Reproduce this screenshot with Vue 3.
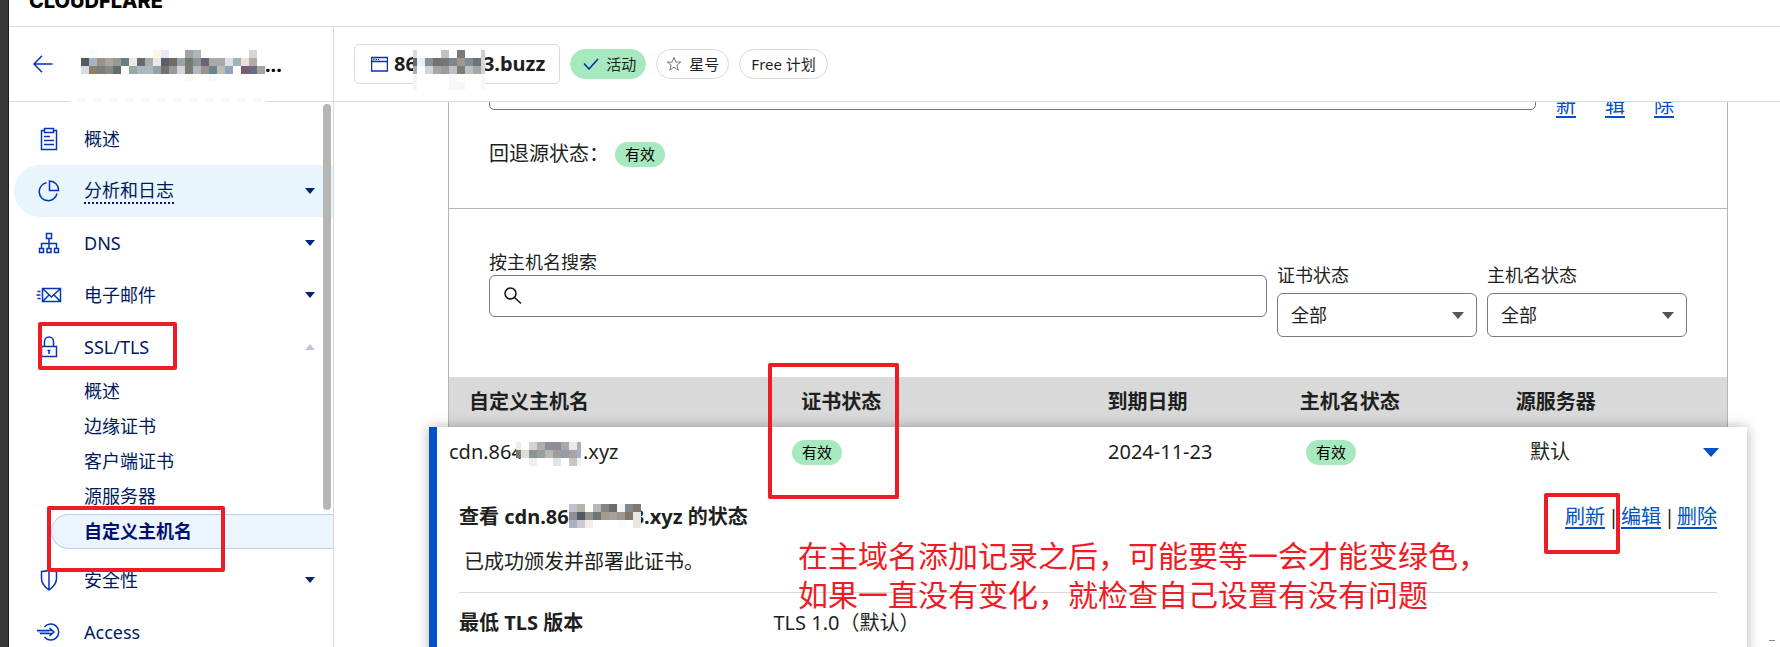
<script setup>
import { h, ref } from 'vue'

// Draws a pixelated patch that hides private characters.
// Each row is a list of colours; "-" leaves a cell clear.
const PixelPatch = ({ rows, widths }) => {
  const xs = []
  let total = 0
  for (const w of widths) {
    xs.push(total)
    total += w
  }
  const height = rows.length * 8
  const rects = []
  rows.forEach((row, r) =>
    row.split(' ').forEach((c, i) => {
      if (c !== '-') rects.push(h('rect', { x: xs[i], y: r * 8, width: widths[i], height: 8, fill: '#' + c }))
    })
  )
  return h('svg', { width: total, height, viewBox: `0 0 ${total} ${height}`, 'shape-rendering': 'crispEdges', 'aria-hidden': 'true' }, rects)
}
PixelPatch.props = ['rows', 'widths']

const accountPatch = {
  widths: Array(23).fill(8),
  rows: [
    '- f8fdff - - - - - - - fff6e8 e6eaf0 - - a0a3a6 b0b5bb - - - - - - d4d8da -',
    '555a60 a5b3c8 98918c b0a59c 9b9991 647f7f ebeae8 646a6e adadae e8e8e8 57606c 746a66 98a2ae 787a72 8b9698 686478 a8abae a9a9ab dfe0e4 a4b3b9 ece0da b7a8aa -',
    'd6dce3 8b8266 7d7b7d 88878a 61706d - 99a6a6 a9b7c1 adb7bd 92a2a8 7a6e72 99989c d4d6da 7c7c74 b2b8bf 9c918b 6c8394 c1b9b4 8fa4b8 - 755f70 6a6883 a5a4a3',
    '- - - - - - - - - - - - - faf9f8 - - f2faff - - - - - -'
  ]
}
const domainPatch = {
  widths: [4, 8, 8, 8, 8, 8, 8, 8, 8, 4],
  rows: [
    'd9dadf fff fff fff b9c3c8 fdfdfd 787a78 fff fff cfccca',
    '65696e eceef3 849196 747270 777475 7c868b a39890 838c90 6c7480 d8d6d4',
    'a9abac fff d0d6db ada49d 9a9b9f bbc0c8 7c7d78 bcc2c3 a6a8a5 d8d2ce',
    'f5f5f5 fff fff fff fff f7f7f7 fff fff fff f7f7f7',
    'f5f5f5 fff fff fff fff f7f7f7 f7f7f7 fff fff f7f7f7'
  ]
}
const hostPatch = {
  widths: [5, 8, 8, 8, 8, 8, 8, 8, 4],
  rows: [
    'f2ebe5 fff d3d3d6 afabb0 8c8e98 928b92 a9a8ac e9e9ed a8b0bc',
    '757977 dcdcd8 879493 9c9da0 b9b9b4 a09e9d 989ca8 a6a4a6 a9b3c8',
    '- fff f5eeec fff fff dde4ea fff c9c5be eef3f8'
  ]
}
const titlePatch = {
  widths: Array(9).fill(8),
  rows: [
    'bfc2cc b9b2a8 fff b5bab6 82848a 6e6c64 f5f5f5 838791 827769',
    '8c8f96 565963 93948e 71776e a59a8c a3a199 a09390 81756c e9e6e2',
    'a9b1bf cbc9ce f3eee9 fff fff fff fcfcfc fff e9e5e0'
  ]
}

const nav = [
  { label: '概述', icon: 'overview' },
  { label: '分析和日志', icon: 'analytics', caret: 'down', hover: true },
  { label: 'DNS', icon: 'dns', caret: 'down' },
  { label: '电子邮件', icon: 'email', caret: 'down' },
  {
    label: 'SSL/TLS',
    icon: 'ssl',
    caret: 'up',
    marked: true,
    children: [
      { label: '概述' },
      { label: '边缘证书' },
      { label: '客户端证书' },
      { label: '源服务器' },
      { label: '自定义主机名', current: true }
    ]
  },
  { label: '安全性', icon: 'shield', caret: 'down' },
  { label: 'Access', icon: 'access' }
]

const filters = [
  { id: 'cert-status', label: '证书状态', value: ref('all') },
  { id: 'host-status', label: '主机名状态', value: ref('all') }
]
const query = ref('')
const origin = ref('')
</script>

<template>
  <div class="shell">
    <div class="edge"></div>
    <div class="app">
      <header class="brandbar"><a class="brand" href="#">CLOUDFLARE</a></header>

      <div class="body">
        <aside class="sidebar">
          <div class="account">
            <button class="back" type="button" aria-label="返回">
              <svg width="20" height="18" viewBox="0 0 20 18"><path d="M9 .8 1 9l8 8.200M1 9h18.500" /></svg>
            </button>
            <span class="account-name"><PixelPatch v-bind="accountPatch" /><b>...</b></span>
            <span class="account-edge"></span>
          </div>

          <nav class="nav">
            <template v-for="item in nav" :key="item.label">
              <a class="item" :class="{ hover: item.hover }" href="#">
                <svg class="icon" width="26" height="24" viewBox="0 0 26 24">
                  <template v-if="item.icon === 'overview'">
                    <path d="M8.500 3.500H5.500v19h15v-19h-3M8.500 1.500h9v4h-9zM8 9.500h6M8 13.500h10M8 17.500h10" />
                  </template>
                  <template v-else-if="item.icon === 'analytics'">
                    <path d="M10.500 3.800A9 9 0 1 0 21 14.500" /><path d="M13.500 2v9.500H22.500A9 9 0 0 0 13.500 2z" />
                  </template>
                  <template v-else-if="item.icon === 'dns'">
                    <path d="M10.500 2.500h5v5h-5zM3.500 17.500h4v4h-4zM11 17.500h4v4h-4zM18.500 17.500h4v4h-4zM13 7.500v10M5.500 17.500v-5h15v5" />
                  </template>
                  <template v-else-if="item.icon === 'email'">
                    <path d="M6.500 5.500h18v13h-18zM7 6l8.500 8L24 6M7 18l6-6M24 18l-6-6M1.500 8.500h3M.5 12h4M1.500 15.500h3" />
                  </template>
                  <template v-else-if="item.icon === 'ssl'">
                    <path d="M5.500 11.500h15v10h-15zM8.500 11V6.500a4.500 4.500 0 0 1 9 0V11M13 15v4M11.500 15.500h3" />
                  </template>
                  <template v-else-if="item.icon === 'shield'">
                    <path d="M5.500 3.500q4 0 7.500-1.500 3.500 1.500 7.500 1.500v7c0 6-4 9-7.500 11.500C9.500 19.500 5.500 16.500 5.500 10.500zM13 2v20" />
                  </template>
                  <template v-else>
                    <path d="M8.500 7a8 8 0 1 1 0 10" /><path class="soft" d="M1 11h12v2H3z" /><path d="M1 10.500h16M4 13.500h13M13.500 8l4.500 4-4.500 4" />
                  </template>
                </svg>
                <span class="label">{{ item.label }}</span>
                <svg v-if="item.caret" class="caret" :class="item.caret" width="10" height="6" viewBox="0 0 10 6"><path d="M0 0h10L5 6z" /></svg>
                <i v-if="item.marked" class="mark mark-ssl"></i>
              </a>
              <ul v-if="item.children" class="sub">
                <li v-for="child in item.children" :key="child.label">
                  <a href="#" :class="{ current: child.current }">{{ child.label }}</a>
                  <i v-if="child.current" class="mark mark-custom"></i>
                </li>
              </ul>
            </template>
            <span class="thumb"></span>
          </nav>
        </aside>

        <main class="main">
          <div class="zonebar">
            <button class="zone" type="button">
              <svg class="window" width="17" height="16" viewBox="0 0 17 16"><path d="M.5 1.500h16v13.500H.5zM.5 5.500h16" /><path class="dots" d="M2 3.500h6" /></svg>
              <span>86</span><span class="gap"><PixelPatch class="patch" v-bind="domainPatch" /></span><span>3.buzz</span>
            </button>
            <span class="tag active">
              <svg width="16" height="12" viewBox="0 0 16 12"><path d="M1 5.500 6 11 15 1" /></svg>活动
            </span>
            <button class="tag star" type="button">
              <svg width="16" height="16" viewBox="0 0 16 16"><path d="m8 1.300 1.800 4.800h5l-4 3.100 1.500 5L8 11.200l-4.300 3 1.500-5-4-3.100h5z" /></svg>星号
            </button>
            <span class="tag plan">Free 计划</span>
          </div>

          <div class="viewport">
            <section class="card">
              <div class="fallback">
                <div class="origin">
                  <input v-model="origin" type="text" aria-label="回退源" />
                  <a href="#">刷新</a><a href="#">编辑</a><a href="#">删除</a>
                </div>
                <p class="state">回退源状态：<span class="ok">有效</span></p>
              </div>

              <div class="filters">
                <div class="search">
                  <label for="host-search">按主机名搜索</label>
                  <div class="search-box">
                    <svg width="18" height="18" viewBox="0 0 18 18"><circle cx="6.500" cy="6.500" r="5.500" /><path d="m10.500 10.500 6.500 6" /></svg>
                    <input id="host-search" v-model="query" type="text" />
                  </div>
                </div>
                <div v-for="f in filters" :key="f.id" class="filter">
                  <label :for="f.id">{{ f.label }}</label>
                  <div class="select">
                    <select :id="f.id" v-model="f.value.value"><option value="all">全部</option></select>
                    <svg width="12" height="7" viewBox="0 0 12 7"><path d="M0 0h12L6 7z" /></svg>
                  </div>
                </div>
              </div>

              <table class="hosts">
                <thead>
                  <tr>
                    <th>自定义主机名</th>
                    <th class="cert">证书状态<i class="mark mark-cert"></i></th>
                    <th>到期日期</th>
                    <th>主机名状态</th>
                    <th>源服务器</th>
                  </tr>
                </thead>
                <tbody>
                  <tr class="host">
                    <td>cdn.864<span class="gap"><PixelPatch class="patch" v-bind="hostPatch" /></span>.xyz</td>
                    <td><span class="ok">有效</span></td>
                    <td>2024-11-23</td>
                    <td><span class="ok">有效</span></td>
                    <td class="last">
                      默认
                      <button type="button" aria-label="收起"><svg width="16" height="9" viewBox="0 0 16 9"><path d="M0 0h16L8 9z" /></svg></button>
                    </td>
                  </tr>
                  <tr class="detail">
                    <td colspan="5">
                      <div class="detail-head">
                        <h3>查看 cdn.86<span class="gap"><PixelPatch class="patch" v-bind="titlePatch" /></span>3.xyz 的状态</h3>
                        <div class="actions">
                          <a href="#">刷新</a><span>|</span><a href="#">编辑</a><span>|</span><a href="#">删除</a>
                          <i class="mark mark-refresh"></i>
                        </div>
                      </div>
                      <p class="message">已成功颁发并部署此证书。</p>
                      <dl>
                        <dt>最低 TLS 版本</dt>
                        <dd>TLS 1.0（默认）</dd>
                      </dl>
                      <p class="note">在主域名添加记录之后，可能要等一会才能变绿色，<br />如果一直没有变化，就检查自己设置有没有问题</p>
                    </td>
                  </tr>
                </tbody>
              </table>
            </section>
            <span class="speck"></span>
          </div>
        </main>
      </div>
    </div>
  </div>
</template>

<style>
body {
  margin: 0;
  overflow: hidden;
}
</style>

<style scoped>
* {
  box-sizing: border-box;
}
.shell {
  display: flex;
  height: 100vh;
  overflow: hidden;
  background: #fff;
  color: #1d1f20;
  font: 400 20px/30px "Noto Sans", "Noto Sans CJK SC", sans-serif;
}
button,
input,
select {
  margin: 0;
  padding: 0;
  border: 0;
  background: none;
  color: inherit;
  font: inherit;
}
a {
  color: #0051c3;
}
svg {
  display: block;
  fill: none;
  flex: none;
}
p,
h3,
dl,
dd,
ul {
  margin: 0;
  padding: 0;
}
.edge {
  flex: none;
  width: 9px;
  background: #38383b;
  border-right: 1px solid #1c1c22;
}
.app {
  flex: 1;
  min-width: 0;
  display: flex;
  flex-direction: column;
}
.brandbar {
  flex: none;
  display: flex;
  align-items: flex-end;
  height: 27px;
  padding: 0 20px 16px;
  border-bottom: 1px solid #d9d9d9;
}
.brand {
  color: #000;
  font: 800 20px/18px Inter, sans-serif;
  text-decoration: none;
}
.body {
  flex: 1;
  min-height: 0;
  display: flex;
}

/* sidebar */
.sidebar {
  flex: none;
  display: flex;
  flex-direction: column;
  width: 325px;
  border-right: 1px solid #d9d9d9;
}
.account {
  position: relative;
  flex: none;
  display: flex;
  align-items: center;
  gap: 28px;
  height: 75px;
  padding-left: 24px;
  border-bottom: 1px solid #d9d9d9;
}
.back svg {
  stroke: #0033b8;
  stroke-width: 1.500;
}
.account-name {
  display: flex;
  padding-top: 3px;
  color: #000;
  line-height: 30px;
}
.account-edge {
  position: absolute;
  left: 61px;
  bottom: -1px;
  width: 196px;
  height: 4px;
  background: repeating-linear-gradient(90deg, #fff 0 8px, #f7f7f7 8px 16px);
}
.nav {
  position: relative;
  flex: 1;
  min-height: 0;
  padding-top: 11px;
}
.item {
  position: relative;
  display: flex;
  align-items: center;
  height: 52px;
  margin-left: 5px;
  padding: 0 18px 0 22px;
  border-radius: 26px 0 0 26px;
  color: #001a5e;
  font-size: 18px;
  line-height: 24px;
  text-decoration: none;
}
.item.hover {
  background: #e8f6fb;
}
.item.hover .label {
  border-bottom: 2px dotted #001a80;
}
.icon {
  stroke: #0535b5;
  stroke-width: 1.500;
}
.icon .soft {
  fill: #9cc0f5;
  stroke: none;
}
.label {
  margin: 0 auto 0 22px;
}
.caret path {
  fill: #002372;
}
.caret.up {
  transform: rotate(180deg);
}
.caret.up path {
  fill: #bcc8da;
}
.sub {
  list-style: none;
  padding: 1px 0 5px 42px;
}
.sub li {
  position: relative;
}
.sub a {
  display: block;
  height: 35px;
  padding-left: 32px;
  border: 1px solid transparent;
  border-right: 0;
  border-radius: 18px 0 0 18px;
  color: #001a5e;
  font-size: 18px;
  line-height: 33px;
  text-decoration: none;
}
.sub a.current {
  background: #ecf4ff;
  border-color: #b4d1fa;
  color: #00106e;
  font-weight: 700;
}
.thumb {
  position: absolute;
  top: 2px;
  right: 2px;
  width: 8px;
  height: 406px;
  border-radius: 4px;
  background: #b5b5b5;
}

/* hand-drawn highlight frames */
.mark {
  position: absolute;
  z-index: 3;
  border: 4px solid #ee1c25;
  border-radius: 2px;
  pointer-events: none;
}
.mark-ssl {
  left: 24px;
  top: 1px;
  width: 139px;
  height: 48px;
}
.mark-custom {
  left: -4px;
  top: -8px;
  width: 178px;
  height: 66px;
}
.mark-cert {
  left: -33px;
  top: -14px;
  width: 131px;
  height: 136px;
}
.mark-refresh {
  left: -21px;
  top: -10px;
  width: 76px;
  height: 61px;
}

/* zone bar */
.main {
  flex: 1;
  min-width: 0;
  display: flex;
  flex-direction: column;
}
.zonebar {
  flex: none;
  display: flex;
  align-items: center;
  gap: 10px;
  height: 75px;
  padding-left: 20px;
  border-bottom: 1px solid #d9d9d9;
}
.zone {
  display: flex;
  align-items: center;
  height: 40px;
  padding: 0 14px 0 16px;
  border: 1px solid #d9d9d9;
  border-radius: 5px;
  font-weight: 700;
}
.window {
  margin-right: 6px;
  stroke: #0535b5;
  stroke-width: 1.500;
}
.window .dots {
  stroke-dasharray: 1.500 1;
}
.gap {
  position: relative;
  display: inline-block;
  height: 1em;
}
.patch {
  position: absolute;
}
.zone .gap {
  width: 66px;
}
.zone .patch {
  left: -4px;
  top: -4px;
}
.tag {
  display: flex;
  align-items: center;
  gap: 7px;
  height: 30px;
  padding: 0 9px;
  border: 1px solid #d9d9d9;
  border-radius: 15px;
  font-size: 15px;
  line-height: 28px;
}
.tag.active {
  padding: 0 9px 0 12px;
  border-color: #a7e9bf;
  background: #a7e9bf;
}
.tag.plan {
  padding: 0 11px;
}
.tag svg {
  stroke: #002a9c;
  stroke-width: 1.500;
}
.tag.star svg {
  stroke: #777;
  stroke-width: 1;
}

/* content */
.viewport {
  position: relative;
  flex: 1;
  min-height: 0;
  overflow: hidden;
  padding: 0 52px 0 114px;
}
.card {
  min-height: 100%;
  margin-top: -36px;
  border: 1px solid #b6b6b6;
  border-top: 0;
}
.fallback {
  padding: 2px 53px 39px 40px;
  border-bottom: 1px solid #b6b6b6;
}
.origin {
  display: flex;
  gap: 29px;
  height: 42px;
}
.origin input {
  flex: 1;
  min-width: 0;
  margin-right: -9px;
  padding: 0 12px;
  border: 1px solid #797979;
  border-radius: 5px;
}
.origin a {
  width: 20px;
  line-height: 25px;
  text-decoration: underline 2px;
  text-underline-offset: 3px;
  word-break: break-all;
}
.state {
  display: flex;
  align-items: center;
  gap: 6px;
  margin-top: 29px;
}
.ok {
  display: inline-block;
  height: 25px;
  padding: 0 10px;
  border-radius: 13px;
  background: #a7e9bf;
  color: #000;
  font-size: 15px;
  line-height: 25px;
}
.filters {
  display: flex;
  gap: 10px;
  padding: 41px 40px 40px 40px;
  font-size: 18px;
}
.search {
  flex: 1;
  min-width: 0;
}
.search label,
.filter label {
  display: block;
  line-height: 24px;
}
.search-box {
  display: flex;
  align-items: center;
  gap: 10px;
  height: 42px;
  margin-top: 1px;
  padding: 0 14px;
  border: 1px solid #797979;
  border-radius: 6px;
}
.search-box svg {
  stroke: #111;
  stroke-width: 1.500;
}
.search-box input {
  flex: 1;
  min-width: 0;
  outline: 0;
}
.filter {
  width: 200px;
  margin-top: 13px;
}
.select {
  position: relative;
  margin-top: 6px;
}
.select select {
  width: 100%;
  height: 44px;
  padding-left: 13px;
  border: 1px solid #797979;
  border-radius: 6px;
  appearance: none;
}
.select svg {
  position: absolute;
  right: 13px;
  top: 19px;
  fill: #555;
  pointer-events: none;
}

/* hostnames table: both row kinds share five fluid columns */
.hosts,
.hosts thead,
.hosts tbody,
.hosts td,
.hosts th,
.hosts .detail {
  display: block;
  padding: 0;
}
.hosts thead tr {
  display: grid;
  grid-template-columns: 332fr 306fr 192fr 216fr 211fr;
  padding-left: 20px;
  background: #d9d9d9;
}
.hosts th {
  position: relative;
  font-weight: 700;
  line-height: 50px;
  text-align: left;
}
.hosts tbody {
  min-height: 230px;
  margin: 0 -20px;
  border-left: 8px solid #0051c3;
  background: #fff;
  box-shadow: 0 0 12px rgba(0, 0, 0, 0.3);
  position: relative;
  z-index: 1;
}
.host {
  display: grid;
  grid-template-columns: 343fr 316fr 198fr 224fr 217fr;
  padding-left: 12px;
  line-height: 50px;
}
.hosts .host td {
  display: flex;
  align-items: center;
}
.host .gap {
  width: 60px;
}
.host .patch {
  left: -7px;
  top: 0;
}
.hosts .host .last {
  justify-content: space-between;
  padding-right: 28px;
}
.last button path {
  fill: #0051c3;
}
.hosts .detail {
  padding: 26px 30px 0 22px;
}
.detail td {
  position: relative;
}
.detail-head {
  display: flex;
  justify-content: space-between;
}
h3 {
  font-size: 20px;
  font-weight: 700;
  line-height: 28px;
}
h3 .gap {
  width: 64px;
}
h3 .patch {
  left: 0;
  top: 0;
}
.actions {
  position: relative;
  display: flex;
  gap: 3px;
  line-height: 28px;
}
.actions a {
  text-decoration: underline 2px;
  text-underline-offset: 3px;
}
.actions span {
  width: 10px;
  text-align: center;
}
.message {
  padding: 16px 5px 15px;
  border-bottom: 1px solid #d9d9d9;
}
dl {
  display: flex;
  padding-top: 15px;
}
dt {
  flex: none;
  width: 25%;
  font-weight: 700;
}
.note {
  position: absolute;
  left: 339px;
  top: 33px;
  color: #ee1c25;
  font-size: 30px;
  line-height: 39px;
  white-space: nowrap;
}
.speck {
  position: absolute;
  right: 5px;
  bottom: 6px;
  width: 6px;
  height: 1px;
  background: #888;
}
</style>
